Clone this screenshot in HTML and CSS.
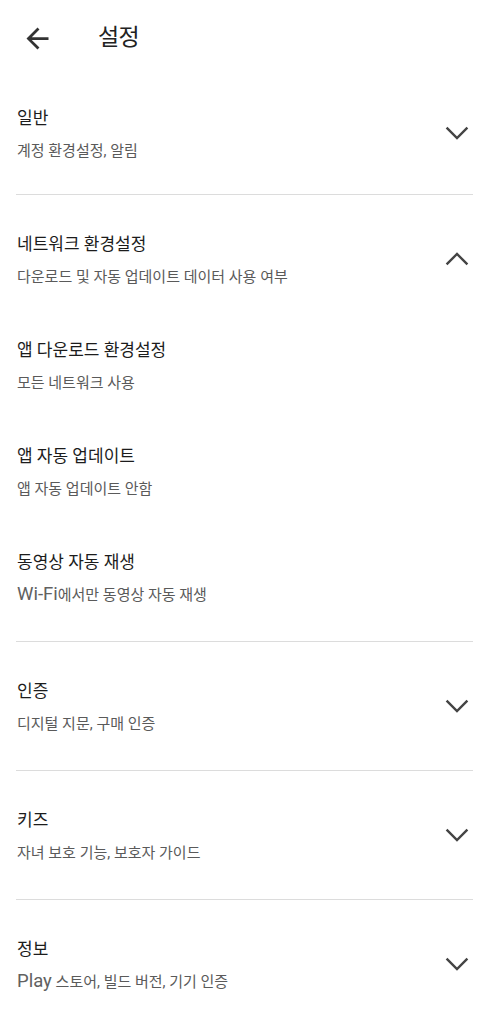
FILE: index.html
```html
<!DOCTYPE html>
<html lang="ko">
<head>
<meta charset="utf-8">
<link rel="stylesheet" href="styles.css">
</head>
<body>
<header class="topbar">
  <svg class="back" viewBox="0 0 24 24" width="33" height="33"><path d="M20 11H7.83l5.59-5.59L12 4l-8 8 8 8 1.41-1.41L7.83 13H20v-2z" fill="#333"/></svg>
  <h1 class="title">설정</h1>
</header>
<main>
  <section class="section first">
    <div class="item">
      <div class="texts"><div class="name">일반</div><div class="desc">계정 환경설정, 알림</div></div>
      <svg class="chev" viewBox="0 0 24 14" width="24" height="14"><polyline points="1.6,1.6 12,12 22.4,1.6" fill="none" stroke="#444" stroke-width="2.4"/></svg>
    </div>
  </section>
  <section class="section">
    <div class="item">
      <div class="texts"><div class="name">네트워크 환경설정</div><div class="desc">다운로드 및 자동 업데이트 데이터 사용 여부</div></div>
      <svg class="chev" viewBox="0 0 24 14" width="24" height="14"><polyline points="1.6,12.4 12,2 22.4,12.4" fill="none" stroke="#444" stroke-width="2.4"/></svg>
    </div>
    <div class="item">
      <div class="texts"><div class="name">앱 다운로드 환경설정</div><div class="desc">모든 네트워크 사용</div></div>
    </div>
    <div class="item">
      <div class="texts"><div class="name">앱 자동 업데이트</div><div class="desc">앱 자동 업데이트 안함</div></div>
    </div>
    <div class="item">
      <div class="texts"><div class="name">동영상 자동 재생</div><div class="desc"><span class="latin">Wi-Fi</span>에서만 동영상 자동 재생</div></div>
    </div>
  </section>
  <section class="section">
    <div class="item">
      <div class="texts"><div class="name">인증</div><div class="desc">디지털 지문, 구매 인증</div></div>
      <svg class="chev" viewBox="0 0 24 14" width="24" height="14"><polyline points="1.6,1.6 12,12 22.4,1.6" fill="none" stroke="#444" stroke-width="2.4"/></svg>
    </div>
  </section>
  <section class="section">
    <div class="item">
      <div class="texts"><div class="name">키즈</div><div class="desc">자녀 보호 기능, 보호자 가이드</div></div>
      <svg class="chev" viewBox="0 0 24 14" width="24" height="14"><polyline points="1.6,1.6 12,12 22.4,1.6" fill="none" stroke="#444" stroke-width="2.4"/></svg>
    </div>
  </section>
  <section class="section last">
    <div class="item">
      <div class="texts"><div class="name">정보</div><div class="desc"><span class="latin">Play</span> 스토어, 빌드 버전, 기기 인증</div></div>
      <svg class="chev" viewBox="0 0 24 14" width="24" height="14"><polyline points="1.6,1.6 12,12 22.4,1.6" fill="none" stroke="#444" stroke-width="2.4"/></svg>
    </div>
  </section>
</main>
</body>
</html>
```
FILE: styles.css
```css
html, body {
  margin: 0;
  padding: 0;
  background: #ffffff;
}
body {
  font-family: Roboto, "Noto Sans CJK KR", sans-serif;
  color: #1f1f1f;
  width: 490px;
}
.topbar {
  box-sizing: border-box;
  height: 69px;
  padding: 7px 0 0 21px;
  display: flex;
  align-items: center;
}
.back {
  display: block;
  flex: none;
}
.title {
  margin: 0 0 0 44px;
  font-size: 23px;
  font-weight: 400;
  letter-spacing: -0.6px;
  line-height: 30px;
  color: #222;
}
main {
  padding: 0 17px 0 16px;
}
.section {
  padding: 36px 0 36px;
  border-bottom: 1px solid #dcdcdc;
  display: flex;
  flex-direction: column;
  gap: 50px;
}
.section.first {
  padding-bottom: 33px;
}
.section.last {
  border-bottom: none;
}
.item {
  display: flex;
  align-items: center;
  justify-content: space-between;
  padding-left: 1px;
}
.texts {
  display: flex;
  flex-direction: column;
  gap: 10px;
}
.name {
  font-size: 17px;
  line-height: 26px;
  color: #1c1c1c;
}
.desc {
  font-size: 15px;
  line-height: 20px;
  height: 20px;
  color: #5a5a5a;
}
.latin {
  font-size: 18.5px;
  line-height: 0;
  color: #616161;
}
.chev {
  flex: none;
  margin-right: 4px;
}
```
